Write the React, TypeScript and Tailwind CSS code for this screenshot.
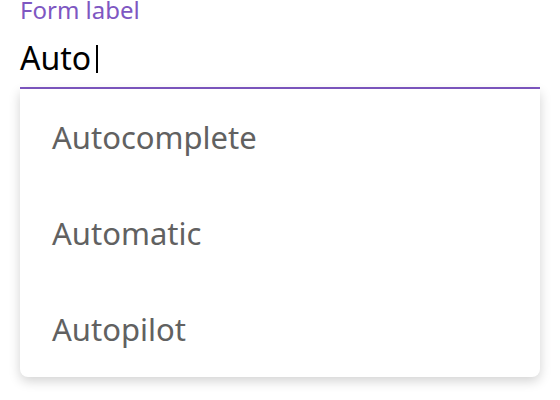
import React from "react";

export default function App() {
  const options = ["Autocomplete", "Automatic", "Autopilot"];
  return (
    <div className="w-[560px] h-[400px] bg-white px-5" style={{ fontFamily: '"Noto Sans", sans-serif' }}>
      <div className="text-[24px] leading-[20px] text-[#7e57c2]">Form label</div>
      <div className="h-[69px] flex items-start border-b-2 border-[#7e57c2] pt-[18px]">
        <span className="text-[32px] leading-[40px] text-black">Auto</span>
        <span className="w-[2px] h-[28px] bg-black ml-[5px] mt-[7px]"></span>
      </div>
      <div className="bg-white rounded-b-lg shadow-[0_4px_12px_rgba(0,0,0,0.18)]">
        {options.map((o) => (
          <div key={o} className="h-[96px] flex items-center pl-8 text-[31px] text-[#616161]">
            {o}
          </div>
        ))}
      </div>
    </div>
  );
}
